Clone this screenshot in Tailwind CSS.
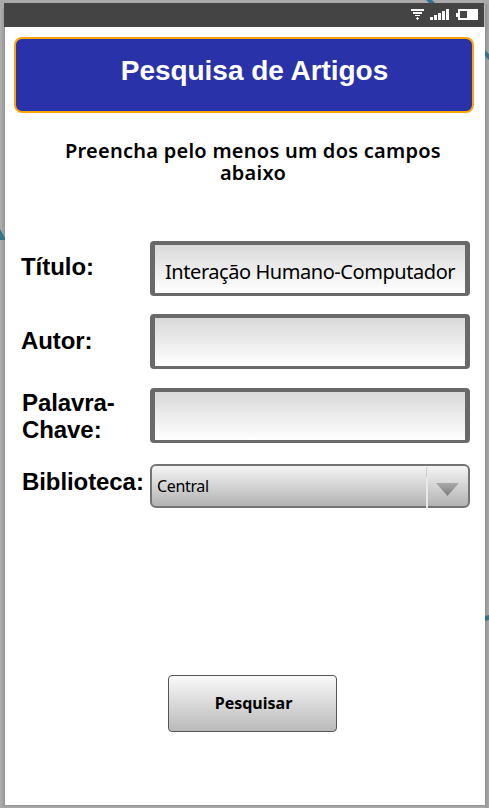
<!DOCTYPE html>
<html lang="pt-BR">
<head>
<meta charset="utf-8">
<title>Pesquisa de Artigos</title>
<script src="https://cdn.jsdelivr.net/npm/@tailwindcss/browser@4"></script>
</head>
<body class="relative h-[808px] w-[489px] overflow-hidden bg-[#a9a9a9] text-black">
<svg class="absolute inset-0" width="489" height="808" viewBox="0 0 489 808">
  <defs><linearGradient id="l"><stop offset="0" stop-color="#b0b0b0"/><stop offset="1" stop-color="#959595"/></linearGradient><linearGradient id="r"><stop offset="0" stop-color="#919191"/><stop offset="1" stop-color="#a8a8a8"/></linearGradient><linearGradient id="b" x2="0" y2="1"><stop offset="0" stop-color="#949494"/><stop offset="1" stop-color="#acacac"/></linearGradient></defs>
  <path fill="url(#l)" d="M0 8h5v797H0z"/><path fill="url(#r)" d="M485 4h4v804h-4z"/><path fill="url(#b)" d="M3 805h483v3H3z"/>
  <path fill="#bdbdbd" d="M484 5h1v22h-1z"/>
  <path fill="#317589" d="M426 0h6l3 3h-6zM485 50l4 4v6l-4-4zM0 229l5 9v2H0zM485 616l4-1v5l-4 1z"/>
</svg>
<div class="relative flex h-[805px] flex-col pt-[3px]">
  <header class="ml-1 flex h-6 w-[480px] shrink-0 justify-end bg-[#444]">
    <svg class="mr-1" width="72" height="24" viewBox="408 3 72 24" fill="#fff" shape-rendering="crispEdges">
      <path d="M411 9h13v2h-13zM413 12h9v2h-9zM415 15h5v1h-5zM417 17h1v3h-1zM416 18h3v1h-3z"/>
      <path d="M430 17h3v3h-3zM434 15h3v5h-3zM438 13h3v7h-3zM442 11h3v9h-3zM446 9h3v11h-3z"/>
      <path fill-rule="evenodd" d="M458 9h20v11h-20v-3h-2v-4h2zM460 11v7h7v-7z"/>
    </svg>
  </header>
  <main class="mx-[5px] h-[778px] w-[480px] shrink-0 bg-white pt-[10px] pl-[9px]">
    <h1 class="flex h-[76px] w-[460px] justify-center rounded-lg border-2 border-[#ffa500] bg-[#2a32aa] pt-[15px] pl-[21px] font-['Liberation_Sans',sans-serif] text-[28px] leading-[34px] font-bold tracking-[-0.04px] whitespace-nowrap text-white">Pesquisa de Artigos</h1>
    <p class="mt-[27px] ml-[9px] h-[101px] w-[460px] text-center font-['Noto_Sans',sans-serif] text-[20px] leading-[22px] font-semibold tracking-[0.25px]">Preencha pelo menos um dos campos<br>abaixo</p>
    <form class="flex flex-col">
      <div class="flex h-[73px] items-start">
        <label class="w-[136px] pt-[12px] pl-[7px] font-['Liberation_Sans',sans-serif] text-2xl leading-[27px] font-bold tracking-[-0.04px] whitespace-nowrap">Título:</label>
        <div class="h-[55px] w-[320px] rounded-[4px] border-x-[5px] border-t-4 border-b-[3px] border-[#696969] bg-linear-to-b from-[#d9d9d9] to-white pt-[13px] pl-[10px] font-['Noto_Sans',sans-serif] text-[20px] leading-[28px] tracking-[-0.44px] whitespace-nowrap">Interação Humano-Computador</div>
      </div>
      <div class="flex h-[74px] items-start">
        <label class="w-[136px] pt-[13px] pl-[7px] font-['Liberation_Sans',sans-serif] text-2xl leading-[27px] font-bold tracking-[-0.08px] whitespace-nowrap">Autor:</label>
        <div class="h-[55px] w-[320px] rounded-[4px] border-x-[5px] border-t-4 border-b-[3px] border-[#696969] bg-linear-to-b from-[#d9d9d9] to-white"></div>
      </div>
      <div class="flex h-[76px] items-start">
        <label class="w-[136px] pt-[1px] pl-[8px] font-['Liberation_Sans',sans-serif] text-2xl leading-[27px] font-bold tracking-[-0.08px] whitespace-nowrap">Palavra-<br>Chave:</label>
        <div class="h-[55px] w-[320px] rounded-[4px] border-x-[5px] border-t-4 border-b-[3px] border-[#696969] bg-linear-to-b from-[#d9d9d9] to-white"></div>
      </div>
      <div class="flex h-[211px] items-start">
        <label class="w-[136px] pt-[4px] pl-[8px] font-['Liberation_Sans',sans-serif] text-2xl leading-[27px] font-bold tracking-[-0.08px] whitespace-nowrap">Biblioteca:</label>
        <div class="flex h-[44px] w-[320px] justify-between rounded-md border-2 border-[#747474] bg-linear-to-b from-[#f5f5f5] to-[#b3b3b3]">
          <span class="pt-[9px] pl-[5px] font-['Noto_Sans',sans-serif] text-base leading-[22px] tracking-[-0.35px]">Central</span>
          <svg class="h-[42px] w-[42px]" viewBox="0 0 42 42">
            <defs><linearGradient id="arrow" x2="0" y2="1"><stop stop-color="#aaa"/><stop offset="1" stop-color="#7c7c7c"/></linearGradient></defs>
            <path fill="#e9e9e9" d="M0 1h2v41H0z"/><path fill="#cfcfcf" d="M0 1h1v10H0z"/>
            <path fill="url(#arrow)" d="M10 17h23L21.5 30z"/>
          </svg>
        </div>
      </div>
      <button type="button" class="ml-[154px] h-[57px] w-[169px] rounded-[4px] border border-[#555] bg-linear-to-b from-[#fafafa] to-[#bababa] pr-px pb-px pl-[3px] font-['Noto_Sans',sans-serif] text-base leading-[22px] font-bold">Pesquisar</button>
    </form>
  </main>
</div>
</body>
</html>
